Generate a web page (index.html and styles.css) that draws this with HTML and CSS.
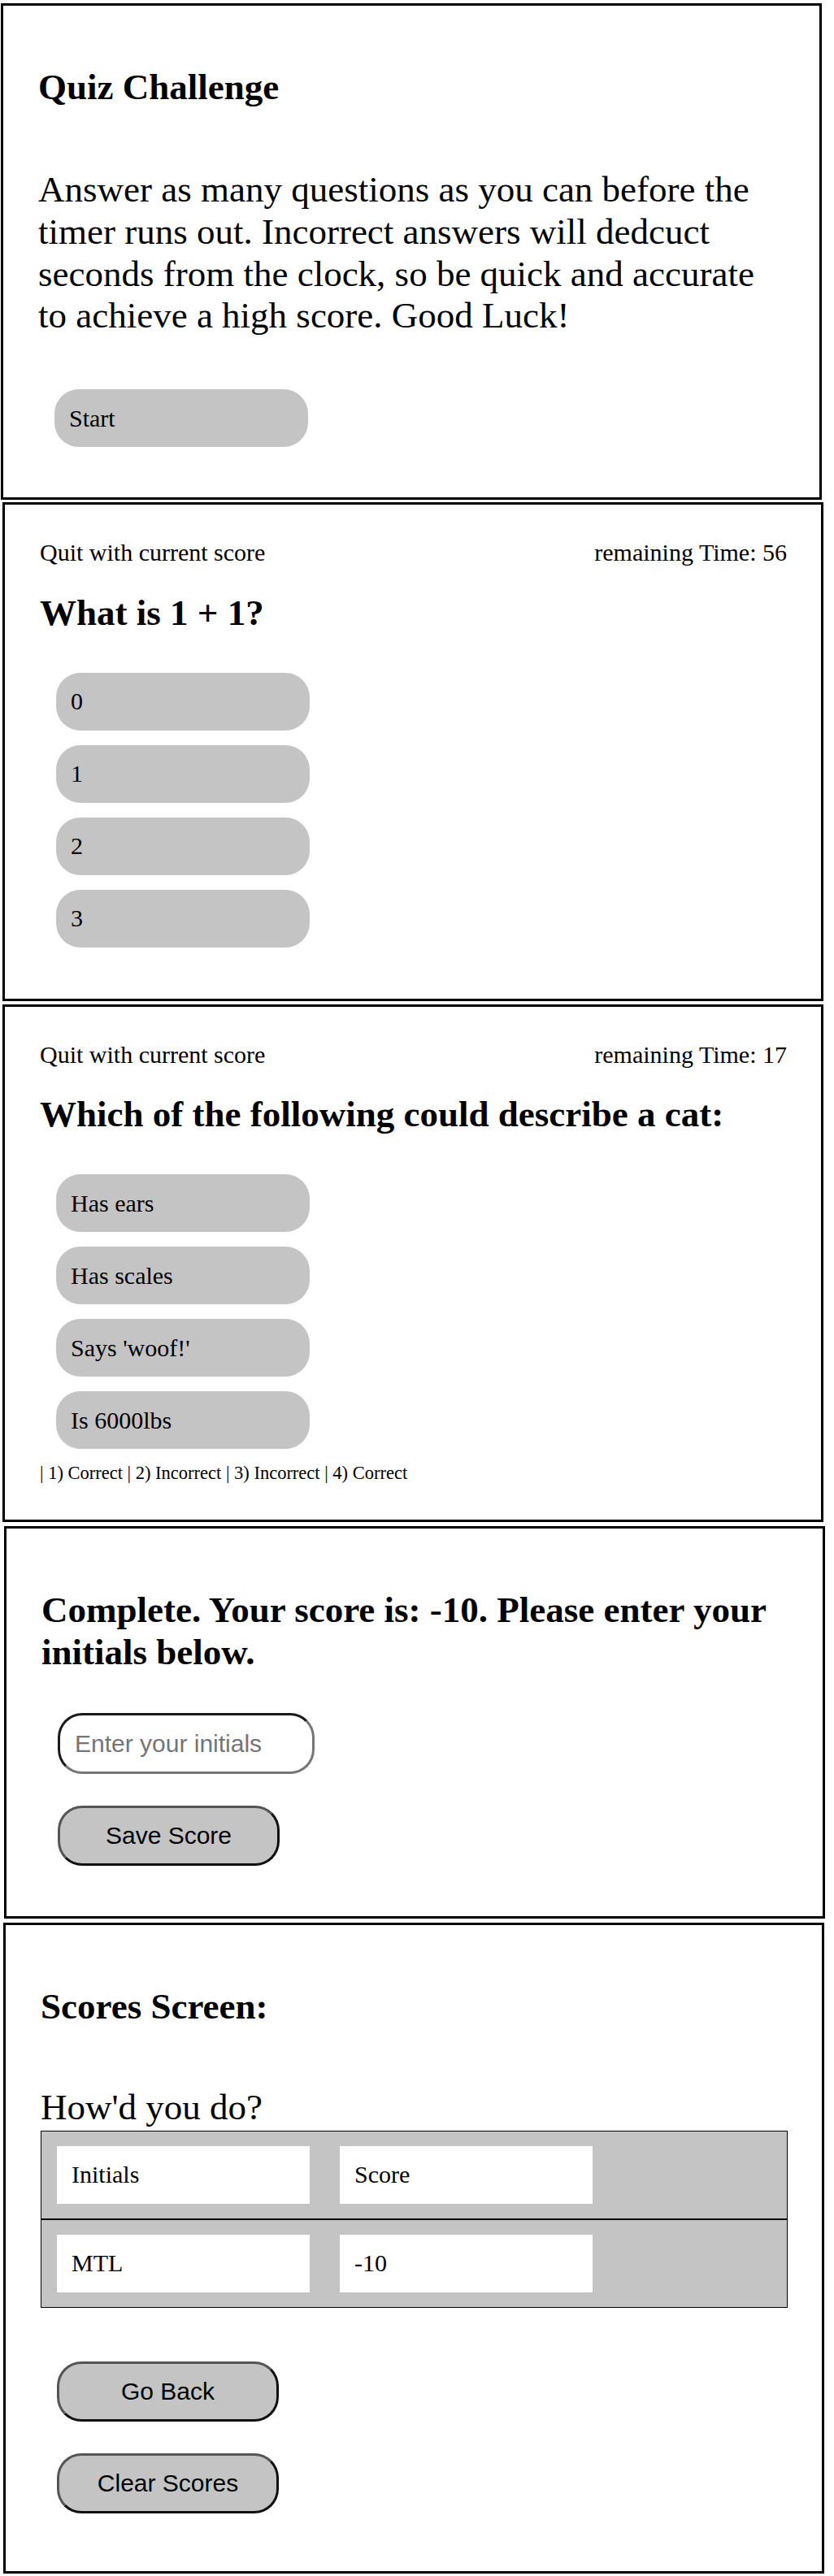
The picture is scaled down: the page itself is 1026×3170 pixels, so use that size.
FILE: index.html
```html
<!DOCTYPE html>
<html lang="en">
<head>
<meta charset="utf-8">
<title>Quiz Challenge</title>
<link rel="stylesheet" href="styles.css">
</head>
<body>
<section class="panel panel-intro">
  <h2 class="title">Quiz Challenge</h2>
  <p class="lead">Answer as many questions as you can before the timer runs out. Incorrect answers will dedcuct seconds from the clock, so be quick and accurate to achieve a high score. Good Luck!</p>
  <button class="choice choice-start">Start</button>
</section>

<section class="panel panel-quiz panel-q1">
  <div class="bar"><span>Quit with current score</span><span>remaining Time: 56</span></div>
  <h2 class="question">What is 1 + 1?</h2>
  <div class="options">
    <button class="choice">0</button>
    <button class="choice">1</button>
    <button class="choice">2</button>
    <button class="choice">3</button>
  </div>
</section>

<section class="panel panel-quiz panel-q2">
  <div class="bar"><span>Quit with current score</span><span>remaining Time: 17</span></div>
  <h2 class="question">Which of the following could describe a cat:</h2>
  <div class="options">
    <button class="choice">Has ears</button>
    <button class="choice">Has scales</button>
    <button class="choice">Says 'woof!'</button>
    <button class="choice">Is 6000lbs</button>
  </div>
  <div class="feedback">| 1) Correct | 2) Incorrect | 3) Incorrect | 4) Correct</div>
</section>

<section class="panel panel-done">
  <h2 class="title">Complete. Your score is: -10. Please enter your initials below.</h2>
  <input class="initials" type="text" placeholder="Enter your initials">
  <button class="action action-save">Save Score</button>
</section>

<section class="panel panel-scores">
  <h2 class="title">Scores Screen:</h2>
  <p class="lead lead-scores">How'd you do?</p>
  <div class="table">
    <div class="row">
      <div class="cell">Initials</div>
      <div class="cell">Score</div>
    </div>
    <div class="row row-sep">
      <div class="cell">MTL</div>
      <div class="cell">-10</div>
    </div>
  </div>
  <button class="action action-back">Go Back</button>
  <button class="action action-clear">Clear Scores</button>
</section>
</body>
</html>
```
FILE: styles.css
```css
html, body {
  margin: 0;
  padding: 0;
  background: #ffffff;
}

body {
  font-family: "Liberation Serif", "Times New Roman", serif;
  font-size: 30px;
  color: #000000;
}

.panel {
  box-sizing: border-box;
  width: 1010px;
  border: 3px solid #000000;
  padding: 0 42px 0 43px;
  display: flex;
  flex-direction: column;
  align-items: flex-start;
}

.panel-intro {
  margin: 4px 0 3px 1px;
  padding-bottom: 62px;
}

.panel-q1 {
  margin: 0 0 4px 3px;
  padding-bottom: 63px;
}

.panel-q2 {
  margin: 0 0 5px 3px;
  padding-bottom: 44px;
}

.panel-done {
  margin: 0 0 5px 5px;
  padding-bottom: 62px;
}

.panel-scores {
  margin: 0 0 0 4px;
  padding-bottom: 71px;
}

.title,
.question {
  font-size: 45px;
  font-weight: bold;
  line-height: 52px;
  margin: 0;
}

.title {
  margin-top: 74px;
}

.lead {
  font-size: 45px;
  line-height: 51.75px;
  margin: 75px 0 0 0;
}

.lead-scores {
  margin-top: 73px;
}

.choice {
  box-sizing: border-box;
  width: 312px;
  height: 71px;
  margin: 0 0 0 20px;
  padding: 0 18px;
  border: none;
  border-radius: 30px;
  background: #c4c4c4;
  font-family: "Liberation Serif", "Times New Roman", serif;
  font-size: 30px;
  color: #000000;
  text-align: left;
}

.choice-start {
  margin-top: 64px;
}

.bar {
  align-self: stretch;
  display: flex;
  justify-content: space-between;
  font-size: 30px;
  line-height: 34.5px;
  margin-top: 42px;
}

.question {
  margin-top: 30px;
}

.options {
  display: flex;
  flex-direction: column;
  gap: 18px;
  margin-top: 48px;
}

.feedback {
  font-size: 22.5px;
  line-height: 26px;
  margin-top: 17px;
}

.initials {
  box-sizing: border-box;
  width: 316px;
  height: 75px;
  margin: 49px 0 0 20px;
  padding: 0 18px;
  border: 3px solid;
  border-color: #1a1a1a #767676 #767676 #1a1a1a;
  border-radius: 30px;
  background: #ffffff;
  font-family: "Liberation Sans", Arial, sans-serif;
  font-size: 30px;
  color: #000000;
}

.initials::placeholder {
  color: #757575;
}

.action {
  box-sizing: border-box;
  width: 273px;
  height: 74px;
  margin: 39px 0 0 20px;
  padding: 0;
  border: 3px solid;
  border-color: #555555 #111111 #111111 #555555;
  border-radius: 30px;
  background: #c4c4c4;
  font-family: "Liberation Sans", Arial, sans-serif;
  font-size: 30px;
  color: #000000;
  text-align: center;
}

.action-back {
  margin-top: 66px;
}

.table {
  align-self: stretch;
  margin-top: 2px;
  border: 1px solid #000000;
  background: #c4c4c4;
}

.row {
  display: flex;
  gap: 37px;
  padding: 18px 0 18px 19px;
}

.row-sep {
  border-top: 2px solid #000000;
}

.cell {
  box-sizing: border-box;
  width: 311px;
  height: 71px;
  padding-left: 18px;
  display: flex;
  align-items: center;
  background: #ffffff;
  font-size: 30px;
  line-height: 34.5px;
}
```
